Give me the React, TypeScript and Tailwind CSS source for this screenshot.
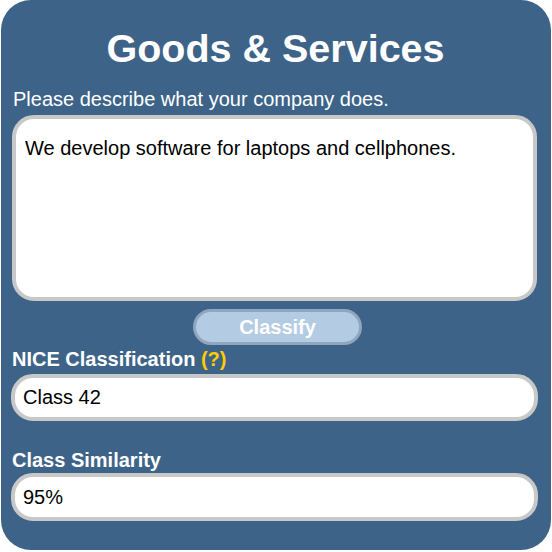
export default function App() {
    return (
        <div className="w-[552px] h-[552px] bg-white font-['Liberation_Sans',Arial,sans-serif]">
            <div className="ml-[1px] w-[550px] h-[550px] rounded-[30px] bg-[#3d6488] flex flex-col pt-[28px] pl-[10px] pr-[11px]">
                <h1 className="text-[39.5px] leading-[40px] font-bold text-white text-center">Goods &amp; Services</h1>
                <p className="mt-[19px] ml-[2px] text-[20px] leading-[24px] text-white">
                    Please describe what your company does.
                </p>
                <textarea
                    className="mt-[4px] ml-[1px] mr-[3px] h-[186px] resize-none rounded-[22px] border-4 border-[#c8c8c8] bg-white pt-[17px] px-[9px] text-[20px] leading-[24px] text-black outline-none"
                    defaultValue="We develop software for laptops and cellphones."
                />
                <div className="mt-[8px] flex justify-center">
                    <button className="ml-[4px] w-[169px] h-[36px] rounded-full border-[3px] border-[#8fa6be] bg-[#b3cce4] text-[20px] leading-[24px] font-bold text-white">
                        Classify
                    </button>
                </div>
                <label className="mt-[2px] ml-[1px] text-[20px] leading-[24px] font-bold text-white">
                    NICE Classification <span className="text-[#ffcc00]">(?)</span>
                </label>
                <input
                    readOnly
                    value="Class 42"
                    className="mt-[3px] mr-[2px] h-[47px] rounded-[22px] border-4 border-[#c8c8c8] bg-white px-[8px] text-[20px] leading-[24px] text-black outline-none"
                />
                <label className="mt-[27px] ml-[1px] text-[20px] leading-[24px] font-bold text-white">Class Similarity</label>
                <input
                    readOnly
                    value="95%"
                    className="mt-[1px] mr-[2px] h-[48px] rounded-[22px] border-4 border-[#c8c8c8] bg-white px-[8px] text-[20px] leading-[24px] text-black outline-none"
                />
            </div>
        </div>
    );
}
